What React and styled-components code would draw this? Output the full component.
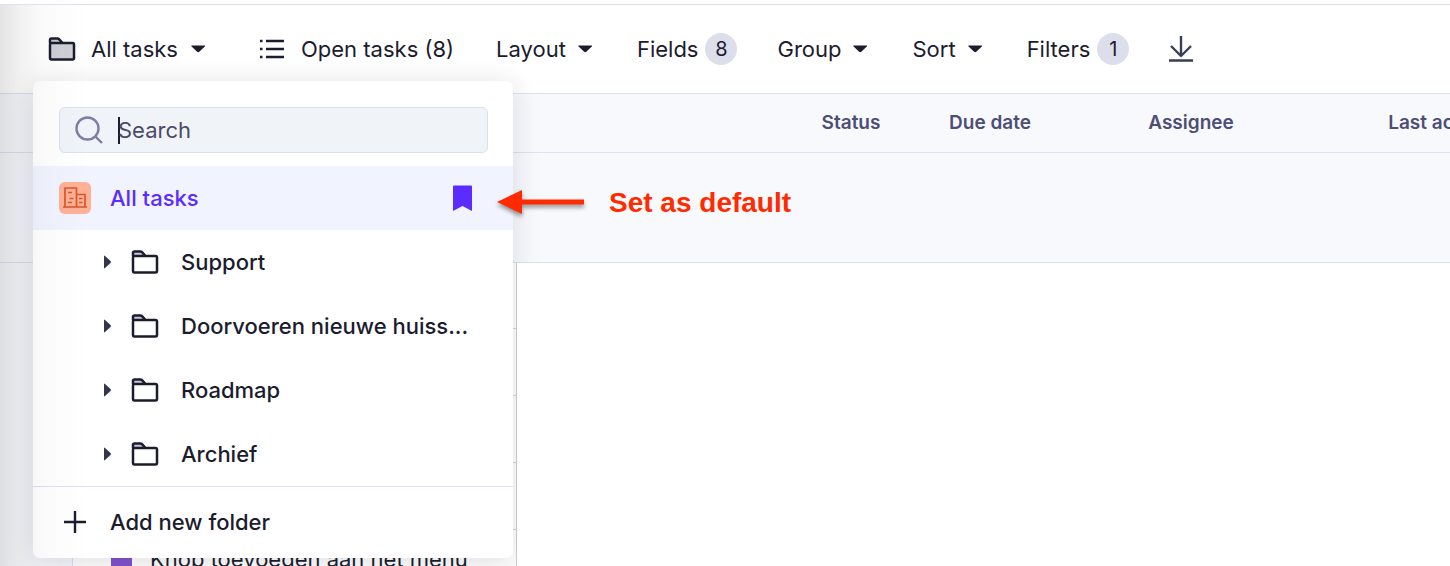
import styled, { createGlobalStyle, css } from "styled-components";

// STYLES

const GlobalStyle = createGlobalStyle`
    *, *::before, *::after {
        box-sizing: border-box;
    }

    body {
        margin: 0;
        overflow: hidden;
        background-color: #fff;
        color: #1b1c2e;
        font-family: Inter, "Liberation Sans", sans-serif;
        font-size: 22px;
        line-height: 28px;
    }

    button, input {
        font: inherit;
        color: inherit;
    }

    svg {
        display: block;
        flex: none;
    }
`;

const Page = styled.main`
    position: relative;
    height: 100vh;
    overflow: hidden;
    padding-top: 4px;
`;

const SideShade = styled.div`
    position: absolute;
    inset: 5px auto 0 0;
    width: 88px;
    pointer-events: none;
    z-index: 3;
    background: linear-gradient(
        to right,
        rgba(0, 0, 0, 0.11),
        rgba(0, 0, 0, 0.06) 20%,
        rgba(0, 0, 0, 0.02) 48%,
        rgba(0, 0, 0, 0)
    );
`;

const Toolbar = styled.nav`
    display: flex;
    align-items: center;
    gap: 40px;
    height: 90px;
    padding-left: 48px;
    border-top: 1px solid #dde1f3;
    border-bottom: 1px solid #dde1f3;
`;

const ToolButton = styled.button`
    display: flex;
    align-items: center;
    gap: ${({ $gap }) => $gap || 7}px;
    margin-right: ${({ $after }) => $after || 0}px;
    padding: 0;
    border: 0;
    background: none;
    white-space: nowrap;
    cursor: pointer;
`;

const Picker = styled.div`
    position: relative;
`;

const Badge = styled.span`
    width: 32px;
    height: 32px;
    border-radius: 50%;
    background-color: #dddeec;
    font-size: 20px;
    line-height: 32px;
    text-align: center;
`;

const Menu = styled.div`
    position: absolute;
    top: 46px;
    left: -15px;
    z-index: 2;
    width: 480px;
    padding-top: 26px;
    border-radius: 7px;
    background-color: #fff;
    box-shadow: 0 4px 28px rgba(20, 22, 40, 0.14);
    font-weight: 500;
`;

const SearchBox = styled.label`
    display: flex;
    align-items: center;
    height: 46px;
    margin: 0 25px 13px 26px;
    padding-left: 15px;
    border: 1px solid #d9e0f0;
    border-radius: 6px;
    background-color: #f0f3f8;
    font-weight: 400;
`;

const Cursor = styled.span`
    width: 2px;
    height: 27px;
    margin: 0 -2px 0 15px;
    background-color: #1b1c2e;
`;

const SearchInput = styled.input`
    flex: 1;
    min-width: 0;
    padding: 0;
    border: 0;
    outline: 0;
    background: none;

    &::placeholder {
        color: #4a4b66;
        opacity: 1;
    }
`;

const menuLine = css`
    display: flex;
    align-items: center;
    width: 100%;
    border: 0;
    background: none;
    text-align: left;
    cursor: pointer;
`;

const Folder = styled.button`
    ${menuLine}
    gap: 20px;
    height: 64px;
    padding: 0 40px 0 71px;
`;

const CurrentFolder = styled(Folder)`
    gap: 19px;
    padding: 0 41px 0 26px;
    background-color: #f1f3ff;
    color: #5b2bff;
`;

const FolderName = styled.span`
    flex: 1;
    min-width: 0;
    overflow: hidden;
    text-overflow: ellipsis;
    white-space: nowrap;
`;

const AddFolder = styled.button`
    ${menuLine}
    gap: 19px;
    height: 72px;
    padding: 0 26px 2px;
    border-top: 1px solid #dde1f3;
`;

const TaskTable = styled.table`
    width: 100%;
    min-width: 1566px;
    table-layout: fixed;
    border-collapse: separate;
    border-spacing: 0;
`;

const HeadCell = styled.th`
    height: 59px;
    padding: 0;
    border-bottom: 1px solid #dde1f3;
    background-color: #f8f9fd;
    color: #4c4e75;
    font-size: 19px;
    font-weight: 600;
`;

const GroupCell = styled.td`
    height: 110px;
    padding: 0;
    border-bottom: 1px solid #dde1f3;
    background-color: #f8f9fd;
`;

const Gutter = styled.td`
    background-color: #f8f9fd;
`;

const TaskCell = styled.td`
    height: ${({ $height }) => $height || 67}px;
    padding: 15px 0 0 38px;
    border-left: 1px solid #dde1f3;
    border-right: 1px solid #cfcfd3;
    border-bottom: 1px solid #cfd5f2;
    vertical-align: top;
`;

// the rows stop the menu's shadow at the edge of the title column
const RestCell = styled.td`
    position: relative;
    z-index: 3;
    background-color: #fff;
`;

const Task = styled.div`
    display: flex;
    align-items: center;
    gap: 18px;
    white-space: nowrap;
`;

const StatusMark = styled.span`
    width: 21px;
    height: 21px;
    background-color: #8052cc;
`;

const Note = styled.div`
    position: absolute;
    top: 187px;
    left: 497px;
    z-index: 4;
    display: flex;
    align-items: center;
    gap: 22px;
    color: #ff2a00;
    font-family: "Liberation Sans", Arial, sans-serif;
    font-size: 28px;
    font-weight: 700;
    line-height: 32px;
    white-space: nowrap;

    svg {
        filter: drop-shadow(0 3px 2px rgba(0, 0, 0, 0.4));
    }
`;

// ICONS

const FolderIcon = ({ filled }) => (
    <svg width="30" height="24" viewBox="0 0 30 24" fill="none" stroke="#1b1c2e" strokeWidth="2.5" strokeLinejoin="round" aria-hidden="true">
        <path d="M2 6V3a1.5 1.5 0 0 1 1.5-1.5H9.500a2 2 0 0 1 1.500.6L14.500 6" fill="#c9cad0" />
        <rect x="2" y="6" width="24" height="16.5" rx="1.5" fill={filled ? "#cfd0d5" : "#fff"} />
    </svg>
);

const Caret = () => (
    <svg width="24" height="24" viewBox="0 0 24 24" fill="#1b1c2e" aria-hidden="true">
        <path d="M6 8.500h12.400c.7 0 .8.500.4.900l-5.500 5.300c-.7.600-1.500.600-2.200 0L5.600 9.400c-.4-.4-.3-.9.4-.9z" />
    </svg>
);

const ListIcon = () => (
    <svg width="26" height="24" viewBox="0 0 26 24" stroke="#1b1c2e" strokeWidth="2.5" aria-hidden="true">
        <path d="M7 4h18M7 12h18M7 20h18M1 4h2.5M1 12h2.5M1 20h2.5" />
    </svg>
);

const DownloadIcon = () => (
    <svg width="24" height="28" viewBox="0 0 24 28" fill="none" stroke="#3a3d57" strokeWidth="2.4" strokeLinejoin="round" aria-hidden="true">
        <path d="M12 1v20M2 11l10 10 10-10M0 25.5h24" />
    </svg>
);

const SearchIcon = () => (
    <svg width="28" height="28" viewBox="0 0 28 28" fill="none" stroke="#7d7ea6" strokeWidth="2.4" aria-hidden="true">
        <circle cx="12.5" cy="12.5" r="11" />
        <path d="M20.3 20.3l6.700 6.700" />
    </svg>
);

const BuildingIcon = () => (
    <svg width="32" height="32" viewBox="0 0 32 32" fill="none" stroke="#d9562c" strokeWidth="1.7" strokeLinejoin="round" aria-hidden="true">
        <rect width="32" height="32" rx="6" fill="#ffb196" stroke="none" />
        <path d="M4 25h24M6 25V6h11.500v19M17.500 12.500H26V25" />
        <path d="M9 10.500h4M10.500 16.500h4M9 20.500h4M20 16.500h3.500M20 20.500h3.500" />
    </svg>
);

const BookmarkIcon = () => (
    <svg width="19" height="26" viewBox="0 0 19 26" fill="#5b2bff" aria-hidden="true">
        <path d="M0 1.500Q0 .5 1 .5h17q1 0 1 1V26l-9.500-5L0 26z" />
    </svg>
);

const ExpandIcon = () => (
    <svg width="7" height="14" viewBox="0 0 7 14" fill="#33354f" aria-hidden="true">
        <path d="M0 1.500Q0 0 1 1l5.500 5q.8 1 0 2L1 13q-1 1-1-.5z" />
    </svg>
);

const PlusIcon = () => (
    <svg width="32" height="24" viewBox="0 0 32 24" stroke="#1b1c2e" strokeWidth="2.4" aria-hidden="true">
        <path d="M5 12h22M16 1v22" />
    </svg>
);

const ArrowIcon = () => (
    <svg width="90" height="28" viewBox="0 0 90 28" fill="#ff2a00" aria-hidden="true">
        <path d="M0 13L25 1v9.500h62v5H25V25z" />
    </svg>
);

// HTML

const folders = ["Support", "Doorvoeren nieuwe huiss...", "Roadmap", "Archief"];

const FolderMenu = () => (
    <Menu>
        <SearchBox>
            <SearchIcon />
            <Cursor />
            <SearchInput type="text" placeholder="Search" aria-label="Search" />
        </SearchBox>
        <CurrentFolder type="button">
            <BuildingIcon />
            <FolderName>All tasks</FolderName>
            <BookmarkIcon />
        </CurrentFolder>
        {folders.map((name) => (
            <Folder type="button" key={name}>
                <ExpandIcon />
                <FolderIcon />
                <FolderName>{name}</FolderName>
            </Folder>
        ))}
        <AddFolder type="button">
            <PlusIcon />
            <FolderName>Add new folder</FolderName>
        </AddFolder>
    </Menu>
);

const App = () => {
    return (
        <>
            <GlobalStyle />
            <Page>
                <Toolbar>
                    <Picker>
                        <ToolButton type="button" $gap={13} $after={9}>
                            <FolderIcon filled />
                            <ToolButton as="span" $gap={8}>
                                All tasks <Caret />
                            </ToolButton>
                        </ToolButton>
                        <FolderMenu />
                    </Picker>
                    <ToolButton type="button" $gap={16} $after={2}>
                        <ListIcon />
                        Open tasks (8)
                    </ToolButton>
                    <ToolButton type="button">
                        Layout <Caret />
                    </ToolButton>
                    <ToolButton type="button">
                        Fields <Badge>8</Badge>
                    </ToolButton>
                    <ToolButton type="button">
                        Group <Caret />
                    </ToolButton>
                    <ToolButton type="button">
                        Sort <Caret />
                    </ToolButton>
                    <ToolButton type="button">
                        Filters <Badge>1</Badge>
                    </ToolButton>
                    <ToolButton type="button" aria-label="Download">
                        <DownloadIcon />
                    </ToolButton>
                </Toolbar>
                <TaskTable>
                    <colgroup>
                        <col style={{ width: 72 }} />
                        <col style={{ width: 445 }} />
                        <col style={{ width: 265 }} />
                        <col style={{ width: 138 }} />
                        <col style={{ width: 140 }} />
                        <col style={{ width: 262 }} />
                        <col />
                    </colgroup>
                    <thead>
                        <tr>
                            <HeadCell colSpan={3} />
                            <HeadCell>Status</HeadCell>
                            <HeadCell>Due date</HeadCell>
                            <HeadCell>Assignee</HeadCell>
                            <HeadCell>Last activity</HeadCell>
                        </tr>
                    </thead>
                    <tbody>
                        <tr>
                            <GroupCell colSpan={7} />
                        </tr>
                        {["", "", "", "", "Knop toevoegen aan het menu"].map((title, index) => (
                            <tr key={index}>
                                <Gutter />
                                <TaskCell $height={index === 0 ? 66 : 67}>
                                    {title && (
                                        <Task>
                                            <StatusMark />
                                            {title}
                                        </Task>
                                    )}
                                </TaskCell>
                                <RestCell colSpan={5} />
                            </tr>
                        ))}
                    </tbody>
                </TaskTable>
                <SideShade />
                <Note>
                    <ArrowIcon />
                    Set as default
                </Note>
            </Page>
        </>
    );
};

export default App;
